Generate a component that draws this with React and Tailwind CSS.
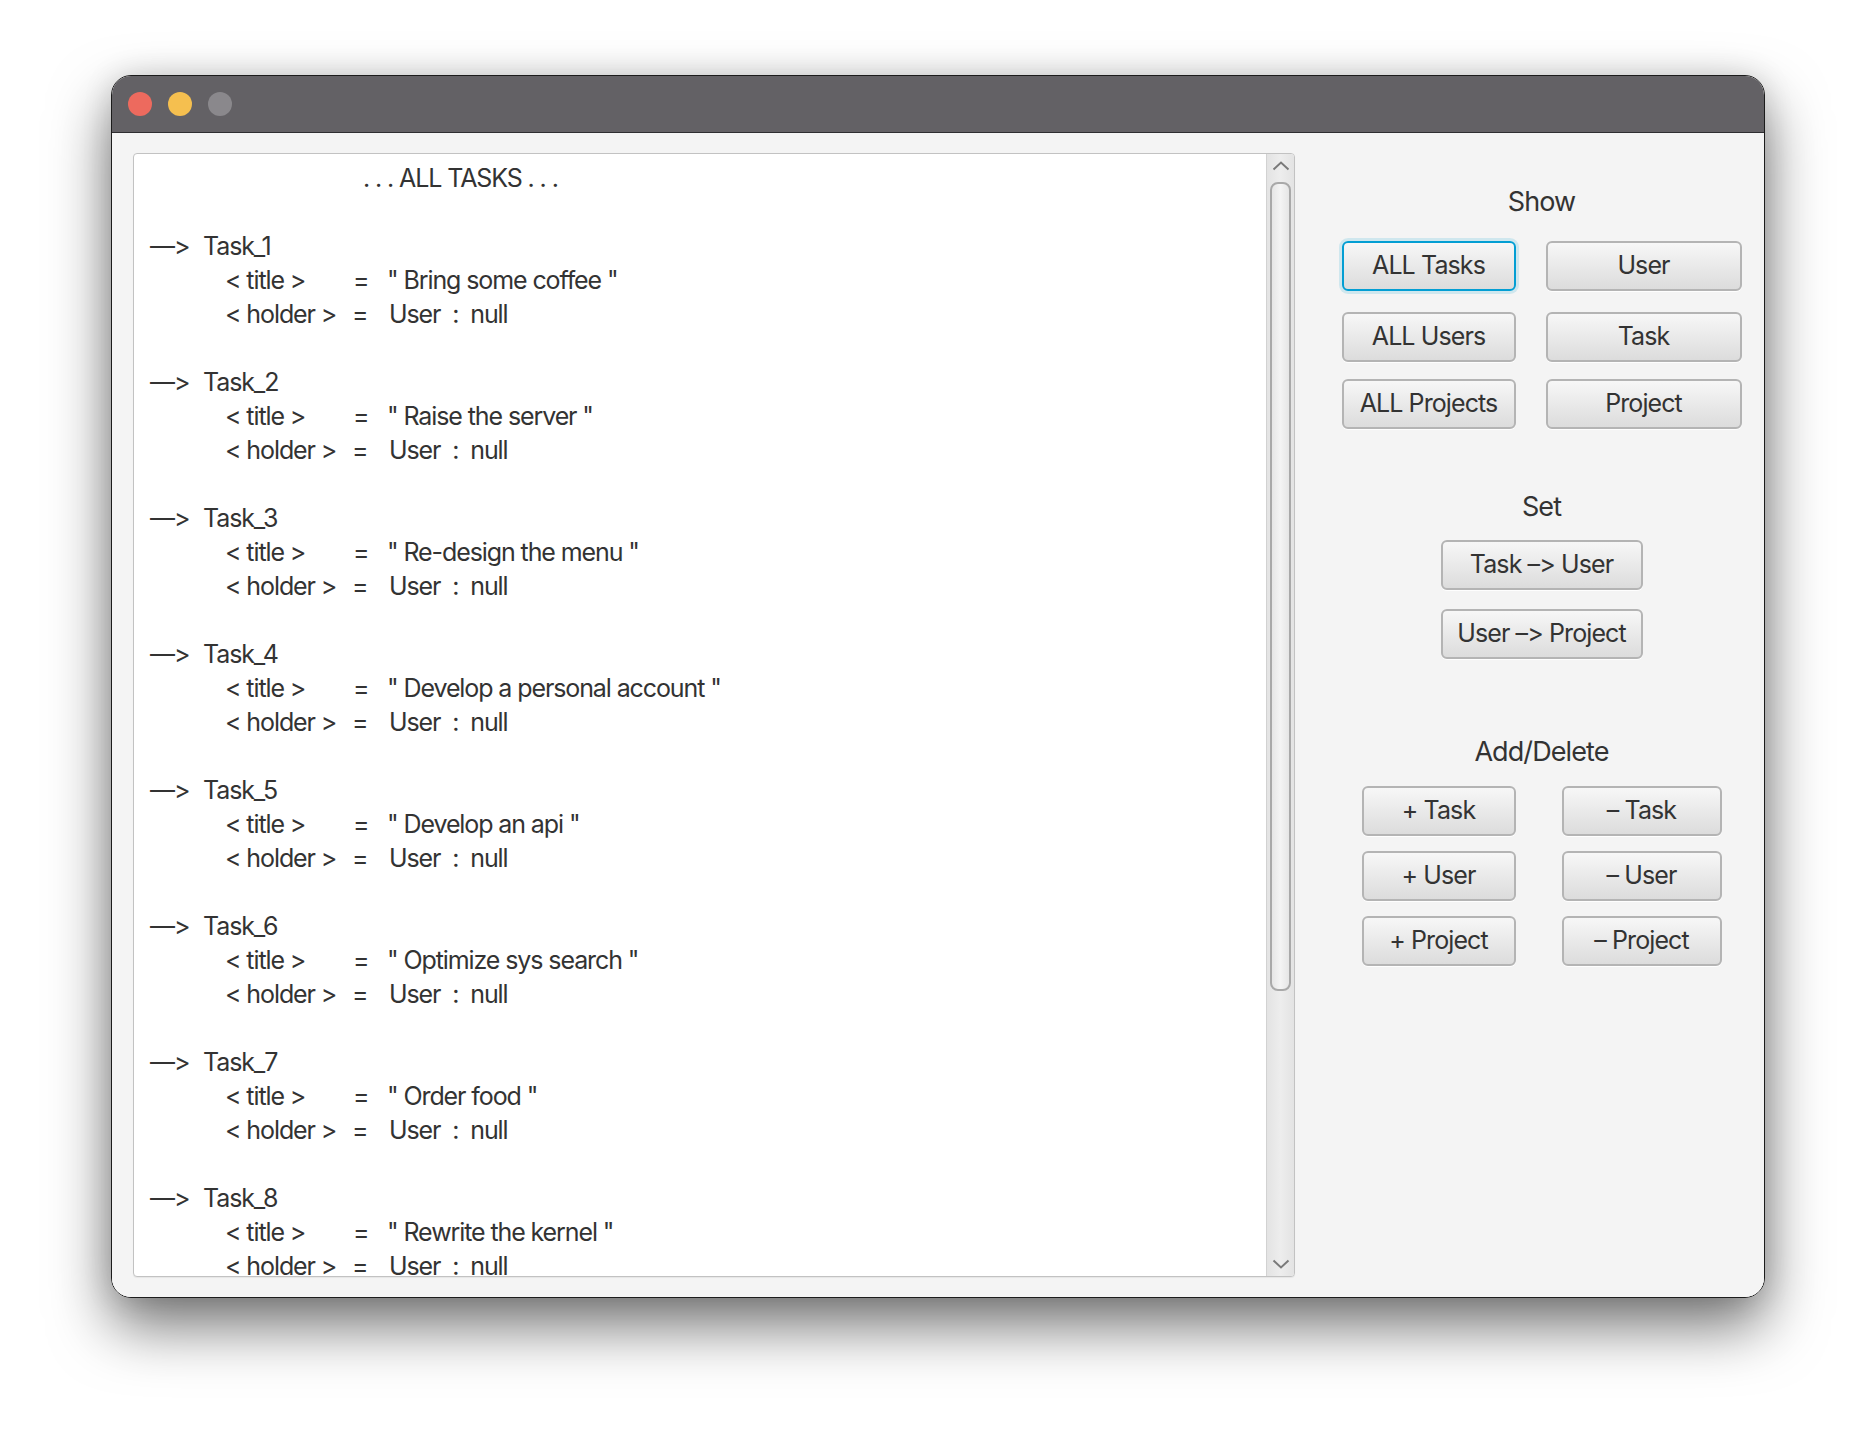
import React from "react";

const tasks = [
  "Bring some coffee",
  "Raise the server",
  "Re-design the menu",
  "Develop a personal account",
  "Develop an api",
  "Optimize sys search",
  "Order food",
  "Rewrite the kernel",
];

function Btn({ children, focused, className = "" }) {
  return (
    <div
      className={
        "flex items-center justify-center h-[50px] rounded-[6px] text-[25px] tracking-[-0.9px] text-[#333] bg-gradient-to-b from-[#f7f7f7] to-[#dcdcdc] whitespace-pre " +
        (focused
          ? "border-2 border-[#039ed3] shadow-[0_0_0_3px_rgba(3,158,211,0.15)] "
          : "border-2 border-[#b4b4b4] shadow-[0_1px_0_rgba(255,255,255,0.9)] ") +
        className
      }
    >
      {children}
    </div>
  );
}

function Chevron({ up }) {
  return (
    <svg width="18" height="10" viewBox="0 0 18 10" className="block">
      <path
        d={up ? "M1.5 8.5 L9 1.5 L16.5 8.5" : "M1.5 1.5 L9 8.5 L16.5 1.5"}
        fill="none"
        stroke="#7a7a7a"
        strokeWidth="2"
      />
    </svg>
  );
}

export default function App() {
  return (
    <div className="w-[1876px] h-[1446px] bg-white pl-[111px] pt-[75px] font-['Inter',sans-serif] text-[#333] [font-feature-settings:'calt'_0,'liga'_0]">
      <div className="w-[1654px] h-[1223px] rounded-[20px] border border-[#1c1c1c] overflow-hidden flex flex-col shadow-[0_28px_60px_rgba(0,0,0,0.55),0_0_30px_rgba(0,0,0,0.12)]">
        {/* title bar */}
        <div className="h-[57px] shrink-0 bg-[#636165] border-b border-[#2e2d30] flex items-start pl-[16px] pt-[16px] gap-[16px]">
          <div className="w-[24px] h-[24px] rounded-full bg-[#ed6a5e]" />
          <div className="w-[24px] h-[24px] rounded-full bg-[#f5bf4f]" />
          <div className="w-[24px] h-[24px] rounded-full bg-[#8a888c]" />
        </div>
        {/* content */}
        <div className="flex-1 bg-[#f4f4f4] flex pl-[21px] pt-[20px] pb-[20px]">
          {/* text area */}
          <div className="w-[1162px] h-[1124px] shrink-0 bg-white border border-[#c2c2c2] rounded-[4px] shadow-[0_1px_1px_rgba(0,0,0,0.06)] flex overflow-hidden">
            <div className="flex-1 overflow-hidden pt-[7px] pl-[16px] text-[25px] leading-[34px] tracking-[-1.1px] whitespace-pre">
              <div className="pl-[213px]">. . . ALL TASKS . . .</div>
              <div>&nbsp;</div>
              {tasks.map((t, i) => (
                <div key={i}>
                  <div className="flex">
                    <span className="w-[53px]">—&gt;</span>
                    <span>Task_{i + 1}</span>
                  </div>
                  <div className="flex pl-[75px]">
                    <span className="w-[128px]">&lt; title &gt;</span>
                    <span className="w-[34px]">=</span>
                    <span>" {t} "</span>
                  </div>
                  <div className="flex pl-[75px]">
                    <span className="w-[127px]">&lt; holder &gt;</span>
                    <span className="w-[37px]">=</span>
                    <span>User  :  null</span>
                  </div>
                  <div>&nbsp;</div>
                </div>
              ))}
            </div>
            {/* scrollbar */}
            <div className="w-[28px] shrink-0 border-l border-[#d2d2d2] bg-gradient-to-r from-[#e3e3e3] via-[#ededed] to-[#e3e3e3] flex flex-col items-center pt-[7px] pb-[7px]">
              <Chevron up />
              <div className="mt-[11px] w-[21px] h-[809px] rounded-[8px] border-2 border-[#a9a9a9] bg-gradient-to-r from-[#e6e6e6] via-[#f4f4f4] to-[#e6e6e6]" />
              <div className="flex-1" />
              <Chevron />
            </div>
          </div>
          {/* right panel */}
          <div className="flex-1 pl-[24px] flex flex-col items-center">
            <div className="mt-[32px] h-[34px] leading-[34px] text-[27px] tracking-[-0.9px]">Show</div>
            <div className="mt-[22px] grid grid-cols-[174px_196px] gap-x-[30px]">
              <Btn focused>ALL Tasks</Btn>
              <Btn>User</Btn>
              <Btn className="mt-[21px]">ALL Users</Btn>
              <Btn className="mt-[21px]">Task</Btn>
              <Btn className="mt-[17px]">ALL Projects</Btn>
              <Btn className="mt-[17px]">Project</Btn>
            </div>
            <div className="mt-[61px] h-[34px] leading-[34px] text-[27px] tracking-[-0.9px]">Set</div>
            <Btn className="mt-[16px] w-[202px]">Task –&gt; User</Btn>
            <Btn className="mt-[19px] w-[202px]">User –&gt; Project</Btn>
            <div className="mt-[76px] h-[34px] leading-[34px] text-[27px] tracking-[-0.9px]">Add/Delete</div>
            <div className="mt-[17px] grid grid-cols-[154px_160px] gap-x-[46px] gap-y-[15px]">
              <Btn>+ Task</Btn>
              <Btn>– Task</Btn>
              <Btn>+ User</Btn>
              <Btn>– User</Btn>
              <Btn>+ Project</Btn>
              <Btn>– Project</Btn>
            </div>
          </div>
        </div>
      </div>
    </div>
  );
}
